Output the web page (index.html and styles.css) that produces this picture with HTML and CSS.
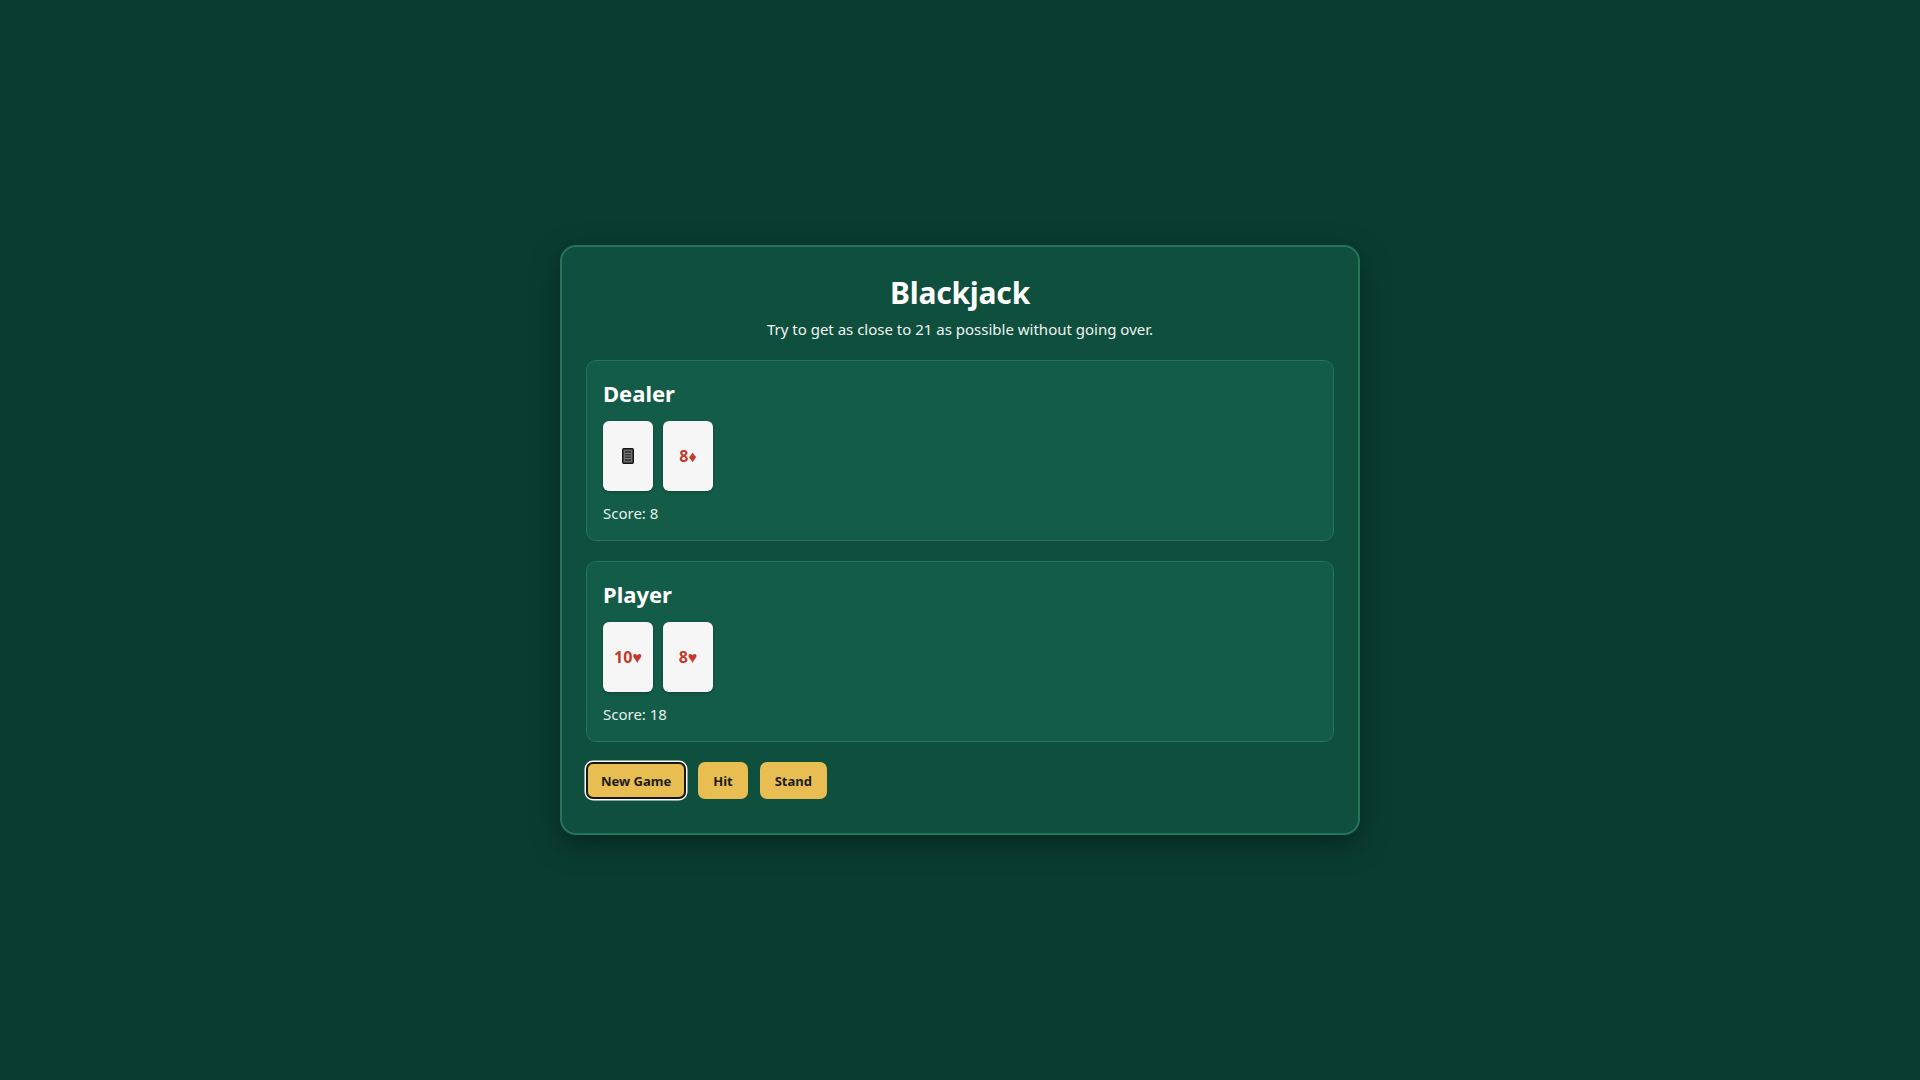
FILE: index.html
```html
<!DOCTYPE html>
<html lang="en">
<head>
<meta charset="utf-8">
<title>Blackjack</title>
<link rel="stylesheet" href="styles.css">
</head>
<body>
<main class="table">
  <header class="intro">
    <h1 class="title">Blackjack</h1>
    <p class="subtitle">Try to get as close to 21 as possible without going over.</p>
  </header>

  <section class="hand">
    <h2 class="hand-title">Dealer</h2>
    <div class="cards">
      <div class="card card-back">
        <svg class="back-glyph" width="12" height="16" viewBox="0 0 12 16" aria-hidden="true">
          <rect x="0.75" y="0.75" width="10.5" height="14.5" rx="1" fill="#6b6b6b" stroke="#141414" stroke-width="1.5"/>
          <rect x="3" y="3" width="6" height="10" fill="#3a3a3a"/>
          <line x1="3" y1="5.5" x2="9" y2="5.5" stroke="#8a8a8a" stroke-width="0.8"/>
          <line x1="3" y1="8" x2="9" y2="8" stroke="#8a8a8a" stroke-width="0.8"/>
          <line x1="3" y1="10.5" x2="9" y2="10.5" stroke="#8a8a8a" stroke-width="0.8"/>
        </svg>
      </div>
      <div class="card red">8♦</div>
    </div>
    <p class="score">Score: 8</p>
  </section>

  <section class="hand">
    <h2 class="hand-title">Player</h2>
    <div class="cards">
      <div class="card red">10♥</div>
      <div class="card red">8♥</div>
    </div>
    <p class="score">Score: 18</p>
  </section>

  <div class="controls">
    <button class="btn focused" type="button">New Game</button>
    <button class="btn" type="button">Hit</button>
    <button class="btn" type="button">Stand</button>
  </div>
</main>
</body>
</html>
```

FILE: styles.css
```css
* {
  box-sizing: border-box;
}

html, body {
  height: 100%;
}

body {
  margin: 0;
  background: #0a3d30;
  font-family: "Noto Sans", "Open Sans", "Liberation Sans", sans-serif;
  color: #ffffff;
  display: flex;
  align-items: center;
  justify-content: center;
}

.table {
  width: 800px;
  background: #0e4f3d;
  border: 2px solid #267558;
  border-radius: 16px;
  padding: 26px 24px 34px;
  box-shadow: 0 10px 30px rgba(0, 0, 0, 0.35);
  display: flex;
  flex-direction: column;
  gap: 20px;
}

.intro {
  text-align: center;
}

.title {
  margin: 0;
  font-size: 30px;
  font-weight: 700;
  line-height: 40px;
  letter-spacing: -0.2px;
}

.subtitle {
  margin: 5px 0 0;
  font-size: 15px;
  line-height: 22px;
  color: #eef5f1;
}

.hand {
  background: #135c48;
  border: 1px solid #247357;
  border-radius: 10px;
  padding: 17px 16px 17px;
}

.hand-title {
  margin: 0 0 13px;
  font-size: 22px;
  font-weight: 700;
  line-height: 30px;
}

.cards {
  display: flex;
  gap: 10px;
}

.card {
  width: 50px;
  height: 70px;
  background: #f6f6f6;
  border-radius: 6px;
  box-shadow: 0 1px 3px rgba(0, 0, 0, 0.3);
  display: flex;
  align-items: center;
  justify-content: center;
  font-size: 16px;
  font-weight: 700;
}

.card.red {
  color: #c0392b;
}

.back-glyph {
  display: block;
}

.score {
  margin: 12px 0 0;
  font-size: 15px;
  line-height: 20px;
  color: #e6f0ec;
}

.controls {
  display: flex;
  gap: 12px;
}

.btn {
  height: 37px;
  padding: 0 15px;
  border: none;
  border-radius: 7px;
  background: #e8bd51;
  color: #1c1c1c;
  font-family: "Noto Sans", "Open Sans", "Liberation Sans", sans-serif;
  font-size: 13px;
  font-weight: 700;
  cursor: pointer;
}

.btn.focused {
  box-shadow: inset 0 0 0 2px #161616, 0 0 0 1.5px #ffffff;
}
```
